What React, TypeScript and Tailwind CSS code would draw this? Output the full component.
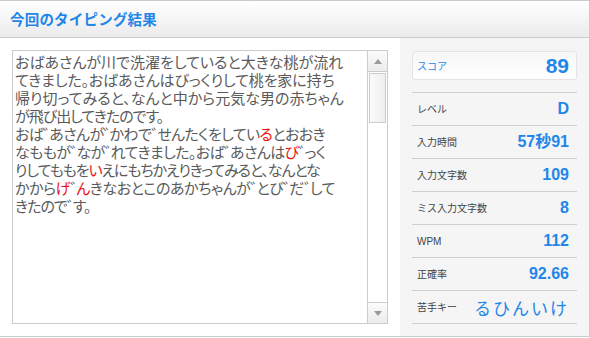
import React from "react";

type Seg = { t: string; red?: boolean };

const lines: { cls: string; segs: Seg[] }[] = [
  { cls: "", segs: [{ t: "おばあさんが川で洗濯をしていると大きな桃が流れ" }] },
  { cls: "tracking-[-0.15px]", segs: [{ t: "てきました。おばあさんはびっくりして桃を家に持ち" }] },
  { cls: "", segs: [{ t: "帰り切ってみると、なんと中から元気な男の赤ちゃん" }] },
  { cls: "tracking-[-1px]", segs: [{ t: "が飛び出してきたのです。" }] },
  {
    cls: "tracking-[-0.6px]",
    segs: [
      { t: "おば゛あさんが゛かわで゛せんたくをしてい" },
      { t: "る", red: true },
      { t: "とおおき" },
    ],
  },
  {
    cls: "tracking-[-0.6px]",
    segs: [
      { t: "なももが゛なが゛れてきました。おば゛あさんは" },
      { t: "び", red: true },
      { t: "゛っく" },
    ],
  },
  {
    cls: "tracking-[-1.1px]",
    segs: [
      { t: "りしてももを" },
      { t: "い", red: true },
      { t: "えにもちかえりきってみると、なんとな" },
    ],
  },
  {
    cls: "tracking-[-0.45px]",
    segs: [
      { t: "かから" },
      { t: "げ", red: true },
      { t: "゛" },
      { t: "ん", red: true },
      { t: "きなおとこのあかちゃんが゛とび゛だ゛して" },
    ],
  },
  { cls: "tracking-[-1px]", segs: [{ t: "きたので゛す。" }] },
];

const rows: { label: string; value: string; kana?: boolean }[] = [
  { label: "レベル", value: "D" },
  { label: "入力時間", value: "57秒91" },
  { label: "入力文字数", value: "109" },
  { label: "ミス入力文字数", value: "8" },
  { label: "WPM", value: "112" },
  { label: "正確率", value: "92.66" },
  { label: "苦手キー", value: "るひんいけ", kana: true },
];

function renderText(t: string) {
  const parts = t.split("゛");
  const out: React.ReactNode[] = [];
  parts.forEach((p, i) => {
    if (p) out.push(<React.Fragment key={"p" + i}>{p}</React.Fragment>);
    if (i < parts.length - 1)
      out.push(
        <span key={"m" + i} className="inline-block w-[6px] overflow-visible">
          ゛
        </span>
      );
  });
  return out;
}

export default function App() {
  return (
    <div className="w-[590px] h-[338px] bg-white font-['Liberation_Sans','Noto_Sans_CJK_JP',sans-serif]">
      <div className="h-[337px] border-t border-r border-b border-[#cccccc] flex flex-col">
        {/* Header */}
        <div className="h-[37px] shrink-0 border-b border-[#cccccc] bg-linear-to-b from-[#ffffff] to-[#ebebeb] flex items-center pl-[10px]">
          <h1 className="text-[14.5px] font-bold text-[#1f86ea] font-['Noto_Sans_CJK_JP',sans-serif] leading-none tracking-[0.2px]">
            今回のタイピング結果
          </h1>
        </div>

        {/* Body */}
        <div className="flex flex-1">
          {/* Left: textarea */}
          <div className="w-[400px] shrink-0 pt-[12px] pl-[12px]">
            <div className="w-[376px] h-[274px] border border-[#cccccc] bg-white flex">
              <div className="flex-1 overflow-hidden pl-[2px] pt-[2px] text-[15px] leading-[18px] text-[#5a5a5a] font-['Noto_Sans_CJK_JP',sans-serif] [font-feature-settings:'palt']">
                {lines.map((line, i) => (
                  <div key={i} className={"whitespace-nowrap " + line.cls}>
                    {line.segs.map((s, j) => (
                      <span key={j} className={s.red ? "text-[#ee1111]" : ""}>
                        {renderText(s.t)}
                      </span>
                    ))}
                  </div>
                ))}
              </div>
              {/* Scrollbar */}
              <div className="w-[20px] shrink-0 border-l border-[#cccccc] flex flex-col bg-white">
                <div className="h-[21px] border-b border-[#cccccc] bg-linear-to-b from-[#fbfbfb] to-[#ececec] flex items-center justify-center">
                  <svg width="8" height="5" viewBox="0 0 8 5">
                    <path d="M4 0 L8 5 L0 5 Z" fill="#9a9a9a" />
                  </svg>
                </div>
                <div className="flex-1 px-[1px] pt-[1px]">
                  <div className="h-[50px] border border-[#cccccc] bg-linear-to-r from-[#fafafa] to-[#eeeeee]" />
                </div>
                <div className="h-[21px] border-t border-[#cccccc] bg-linear-to-b from-[#fbfbfb] to-[#ececec] flex items-center justify-center">
                  <svg width="8" height="5" viewBox="0 0 8 5">
                    <path d="M0 0 L8 0 L4 5 Z" fill="#9a9a9a" />
                  </svg>
                </div>
              </div>
            </div>
          </div>

          {/* Right: stats */}
          <div className="flex-1 bg-[#f5f5f5] px-[12px] pt-[13px]">
            <div className="h-[29px] rounded-[3px] border border-[#e4e4e4] bg-linear-to-b from-[#f7f7f7] to-[#ffffff] flex items-center justify-between pl-[4px] pr-[7px]">
              <span className="text-[10px] text-[#1f86ea] font-['Noto_Sans_CJK_JP',sans-serif]">スコア</span>
              <span className="text-[21px] font-bold text-[#1f86ea] leading-none">89</span>
            </div>
            <div className="mt-[12px] border-t border-[#cfcfcf]">
              {rows.map((r) => (
                <div
                  key={r.label}
                  className="h-[33px] border-b border-[#cfcfcf] flex items-center justify-between pl-[5px] pr-[8px]"
                >
                  <span className="text-[10px] text-[#444444]">{r.label}</span>
                  {r.kana ? (
                    <span className="text-[17px] text-[#1f86ea] tracking-[2px] font-['Noto_Sans_CJK_JP',sans-serif] leading-none">
                      {r.value}
                    </span>
                  ) : (
                    <span className="text-[16px] font-bold text-[#1f86ea] leading-none">{r.value}</span>
                  )}
                </div>
              ))}
            </div>
          </div>
        </div>
      </div>
    </div>
  );
}
